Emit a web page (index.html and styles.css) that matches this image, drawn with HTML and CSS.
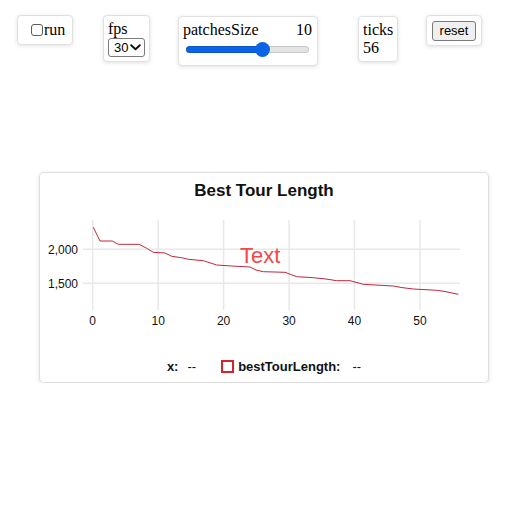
FILE: index.html
```html
<!DOCTYPE html>
<html>
<head>
<meta charset="utf-8">
<link rel="stylesheet" href="styles.css">
</head>
<body>
<div class="page">
  <div class="controls">
    <label class="widget w-run">
      <input type="checkbox" class="check">
      <span>run</span>
    </label>
    <div class="widget w-fps">
      <div class="line">fps</div>
      <div class="select-wrap">
        <select class="select">
          <option>30</option>
        </select>
        <svg class="chev" width="11" height="7" viewBox="0 0 11 7"><path d="M1.2 1.2 L5.5 5.3 L9.8 1.2" fill="none" stroke="#111" stroke-width="1.9" stroke-linecap="round" stroke-linejoin="round"/></svg>
      </div>
    </div>
    <div class="widget w-patch">
      <div class="line row-between"><span>patchesSize</span><span>10</span></div>
      <div class="slider-wrap">
        <input type="range" class="range" min="1" max="15" value="10">
      </div>
    </div>
    <div class="widget w-ticks">
      <div class="line">ticks</div>
      <div class="line">56</div>
    </div>
    <div class="widget w-reset">
      <button class="btn">reset</button>
    </div>
  </div>

  <div class="chart-card">
    <div class="chart-title">Best Tour Length</div>
    <svg class="plot" width="448" height="150" viewBox="0 0 448 150">
      <g stroke="#e8e8e8" stroke-width="1.5">
        <line x1="52.7" y1="20" x2="52.7" y2="110"/>
        <line x1="118.2" y1="20" x2="118.2" y2="110"/>
        <line x1="183.6" y1="20" x2="183.6" y2="110"/>
        <line x1="249.1" y1="20" x2="249.1" y2="110"/>
        <line x1="314.5" y1="20" x2="314.5" y2="110"/>
        <line x1="380" y1="20" x2="380" y2="110"/>
        <line x1="43" y1="49.3" x2="420" y2="49.3"/>
        <line x1="43" y1="83.3" x2="420" y2="83.3"/>
      </g>
      <g class="axis-text" text-anchor="end">
        <text x="38" y="53.5">2,000</text>
        <text x="38" y="87.5">1,500</text>
      </g>
      <g class="axis-text" text-anchor="middle">
        <text x="52.7" y="125">0</text>
        <text x="118.2" y="125">10</text>
        <text x="183.6" y="125">20</text>
        <text x="249.1" y="125">30</text>
        <text x="314.5" y="125">40</text>
        <text x="380" y="125">50</text>
      </g>
      <text class="red-label" x="200" y="63">Text</text>
      <polyline fill="none" stroke="#c0283a" stroke-width="1" stroke-linejoin="round"
        points="53.3,27.3 60,41 72.3,41 78.3,44.3 99,44.3 106.7,48.3 113.3,52.3 125,53 131.7,56.3 141.7,57.7 148.3,59.3 163.3,60.7 176.7,65 191.7,66 205,66.7 210,67 216,70 223.3,71.7 245,72.3 256.7,76.7 273.3,77.7 286,79 296.7,80.7 310,80.7 323.3,84.3 353.3,86 362,87.6 373.3,89 396.7,90.3 405,91.5 418.3,94.3"/>
    </svg>
    <div class="legend">
      <span class="lg-item"><b class="lg-label">x:</b><span class="lg-val">--</span></span>
      <span class="lg-item lg-series"><span class="marker"></span><b class="lg-label">bestTourLength:</b><span class="lg-val">--</span></span>
    </div>
  </div>
</div>
</body>
</html>
```

FILE: styles.css
```css
html, body {
  margin: 0;
  padding: 0;
  background: #fff;
}

.page {
  font-family: "Liberation Serif", "Times New Roman", serif;
  font-size: 16px;
  color: #000;
}

.controls {
  display: flex;
  align-items: flex-start;
  padding: 15px 0 0 17px;
}

.widget {
  box-sizing: border-box;
  border: 1px solid #e1e1e1;
  border-radius: 4px;
  box-shadow: 0 1px 4px rgba(0, 0, 0, 0.12);
  background: #fff;
  padding: 4px;
}

.line {
  line-height: 18px;
  height: 18px;
  white-space: nowrap;
}

.row-between {
  display: flex;
  justify-content: space-between;
  padding-right: 1px;
}

.w-run {
  width: 56px;
  height: 30px;
  display: flex;
  align-items: center;
  padding: 0 0 0 13px;
}

.check {
  -webkit-appearance: none;
  appearance: none;
  box-sizing: border-box;
  width: 12px;
  height: 12px;
  margin: 0 1px 0 0;
  border: 1px solid #5c5c5c;
  border-radius: 3px;
  background: #fff;
}

.w-fps {
  width: 47px;
  height: 47px;
  margin-left: 30px;
}

.select-wrap {
  position: relative;
  width: 37px;
  height: 19px;
}

.select {
  -webkit-appearance: none;
  appearance: none;
  box-sizing: border-box;
  width: 37px;
  height: 19px;
  margin: 0;
  padding: 0 0 0 5px;
  border: 1px solid #7a7a7a;
  border-radius: 3px;
  background: #fff;
  font-family: "Liberation Sans", Arial, sans-serif;
  font-size: 13px;
  color: #000;
  line-height: 17px;
}

.chev {
  position: absolute;
  left: 22px;
  top: 6px;
  pointer-events: none;
}

.w-patch {
  width: 140px;
  height: 50px;
  margin-left: 28px;
  margin-top: 1px;
}

.slider-wrap {
  height: 20px;
  display: flex;
  align-items: center;
  padding: 0 4px 0 3px;
}

.range {
  -webkit-appearance: none;
  appearance: none;
  width: 123px;
  height: 7px;
  margin: 0;
  border-radius: 4px;
  background: linear-gradient(to right, #0b63e5 0%, #0b63e5 64%, #e4e4e4 64%, #e4e4e4 100%);
  box-shadow: inset 0 0 0 1px rgba(0, 0, 0, 0.12);
}

.range::-webkit-slider-thumb {
  -webkit-appearance: none;
  appearance: none;
  width: 15px;
  height: 15px;
  border-radius: 50%;
  background: #0b63e5;
  border: none;
}

.w-ticks {
  width: 40px;
  height: 46px;
  margin-left: 40px;
  margin-top: 1px;
}

.w-reset {
  width: 56px;
  height: 31px;
  margin-left: 28px;
  padding: 5px 5px 4px 5px;
}

.btn {
  box-sizing: border-box;
  width: 44px;
  height: 20px;
  margin: 0;
  padding: 0;
  border: 1px solid #7a7a7a;
  border-radius: 3px;
  background: #efefef;
  font-family: "Liberation Sans", Arial, sans-serif;
  font-size: 13px;
  color: #000;
  line-height: 18px;
}

.chart-card {
  box-sizing: border-box;
  width: 450px;
  height: 211px;
  margin: 106px 0 0 39px;
  border: 1px solid #dedede;
  border-radius: 5px;
  box-shadow: 0 1px 4px rgba(0, 0, 0, 0.12);
  font-family: "Liberation Sans", Arial, sans-serif;
  display: flex;
  flex-direction: column;
}

.chart-title {
  padding-top: 8px;
  height: 20px;
  line-height: 20px;
  font-size: 17px;
  font-weight: bold;
  text-align: center;
  color: #111;
}

.plot {
  display: block;
  margin-top: -1px;
}

.axis-text {
  font-family: "Liberation Sans", Arial, sans-serif;
  font-size: 12px;
  fill: #111;
}

.red-label {
  font-family: "Liberation Sans", Arial, sans-serif;
  font-size: 22px;
  fill: #f24848;
}

.legend {
  display: flex;
  justify-content: center;
  align-items: center;
  height: 18px;
  margin-top: 7px;
  font-size: 13px;
  color: #111;
  gap: 25px;
}

.lg-item {
  display: flex;
  align-items: center;
}

.lg-label {
  font-weight: bold;
}

.lg-val {
  margin-left: 9px;
}

.lg-series .lg-val {
  margin-left: 12px;
}

.marker {
  box-sizing: border-box;
  width: 13px;
  height: 13px;
  border: 2px solid #d8232f;
  margin-right: 4px;
  background: #fff;
}
```
